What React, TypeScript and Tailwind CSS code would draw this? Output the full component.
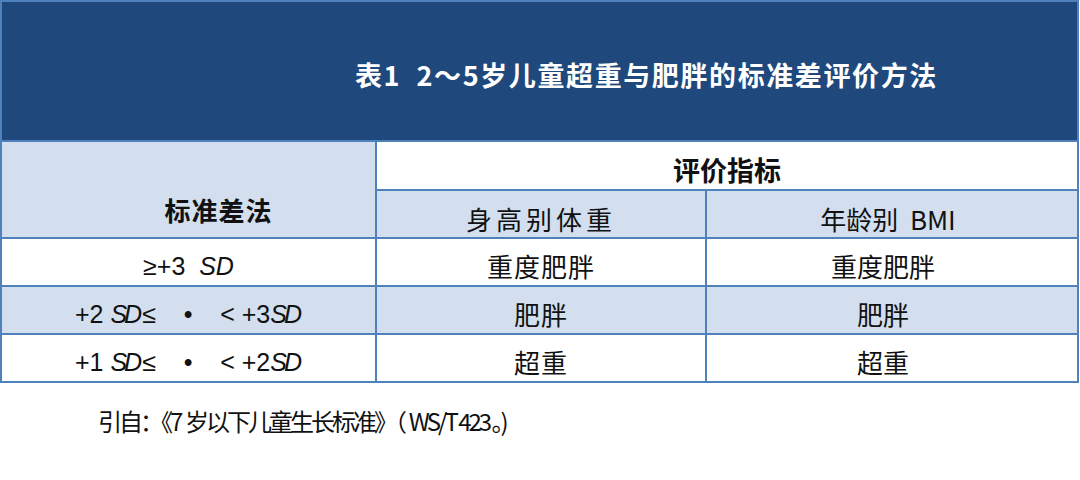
const FONT = { fontFamily: '"Noto Sans CJK SC", "Noto Sans", sans-serif' };
const LATIN = { fontFamily: '"Liberation Sans", "DejaVu Sans", sans-serif' };

function Sd({ tight }: { tight?: boolean }) {
  return <i className={tight ? "tracking-[-3px] pr-[3px]" : ""}>SD</i>;
}

const rows = [
  {
    bg: "bg-white",
    method: (
      <>
        ≥+3&nbsp;&nbsp;<Sd />
      </>
    ),
    a: "重度肥胖",
    b: "重度肥胖",
  },
  {
    bg: "bg-[#d3dfee]",
    method: (
      <>
        +2 <Sd tight />≤&nbsp;&nbsp;&nbsp;&nbsp;•&nbsp;&nbsp;&nbsp;&nbsp;&lt; +3<Sd tight />
      </>
    ),
    a: "肥胖",
    b: "肥胖",
  },
  {
    bg: "bg-white",
    method: (
      <>
        +1 <Sd tight />≤&nbsp;&nbsp;&nbsp;&nbsp;•&nbsp;&nbsp;&nbsp;&nbsp;&lt; +2<Sd tight />
      </>
    ),
    a: "超重",
    b: "超重",
  },
];

export default function App() {
  return (
    <div className="w-[1080px] h-[480px] bg-white text-[#111]" style={FONT}>
      <div className="w-[1079px] grid grid-cols-[373px_328px_370px] grid-rows-[138px_47px_46px_46px_46px_46px] gap-[2px] p-[2px] bg-[#4f81bd]">
        <div className="col-span-3 bg-[#1f497d] flex items-center pl-[353px] pt-[6px]">
          <span className="text-white font-bold text-[27px] leading-none tracking-[1.6px] whitespace-pre">
            {"表1  2～5岁儿童超重与肥胖的标准差评价方法"}
          </span>
        </div>

        <div className="row-span-2 bg-[#d3dfee] flex items-center justify-center pl-[60px] pt-[40px]">
          <span className="font-bold text-[26px] leading-none tracking-[1px]">标准差法</span>
        </div>
        <div className="col-span-2 bg-white flex items-center justify-center pt-[8px]">
          <span className="font-bold text-[27px] leading-none">评价指标</span>
        </div>
        <div className="bg-[#d3dfee] flex items-center justify-center pt-[10px]">
          <span className="text-[26px] leading-none tracking-[4px]">身高别体重</span>
        </div>
        <div className="bg-[#d3dfee] flex items-center justify-center pt-[10px] pr-[8px]">
          <span className="text-[26px] leading-none">年龄别&nbsp;&nbsp;BMI</span>
        </div>

        {rows.map((r, i) => (
          <div key={i} className="contents">
            <div className={`${r.bg} flex items-center justify-center pt-[8px]`}>
              <span className="text-[25px] leading-none whitespace-nowrap" style={LATIN}>
                {r.method}
              </span>
            </div>
            <div className={`${r.bg} flex items-center justify-center pt-[8px]`}>
              <span className="text-[26px] leading-none tracking-[1px]">{r.a}</span>
            </div>
            <div className={`${r.bg} flex items-center justify-center pt-[8px] pr-[18px]`}>
              <span className="text-[26px] leading-none">{r.b}</span>
            </div>
          </div>
        ))}
      </div>

      <div className="pl-[98px] pt-[26px] text-[24px] leading-none tracking-[-3px] whitespace-pre">
        {"引自：《7  岁以下儿童生长标准》（  WS/T 423 。)"}
      </div>
    </div>
  );
}
